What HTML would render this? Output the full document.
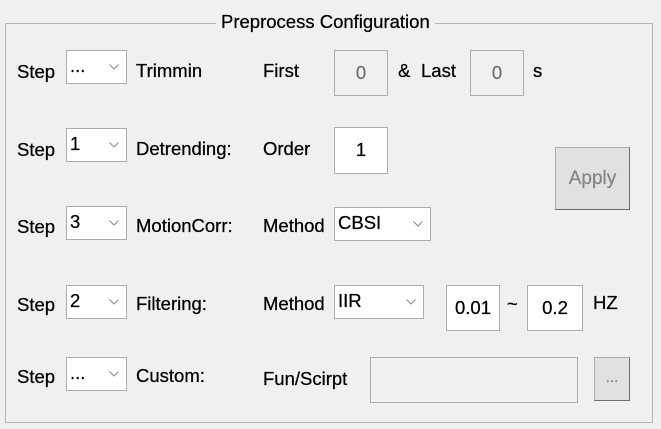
<!DOCTYPE html>
<html><head><style>
body{margin:0;width:661px;height:429px;background:#f0f0f0;font-family:"Liberation Sans",Arial,sans-serif;font-size:18.5px;color:#000;position:relative;overflow:hidden;-webkit-text-stroke:0.25px #000}
.a{position:absolute}
.frame{left:5px;top:23px;width:646px;height:398px;border:1px solid #b4b4b4}
.title{left:216px;top:11px;padding:0 5px;background:#f0f0f0;font-size:18.5px;line-height:22px}
.t{position:absolute;line-height:20px}
.dd{position:absolute;background:#fff;border:1px solid #adadad;box-sizing:border-box;height:34px}
.dd span{position:absolute;left:3px;top:5px;line-height:20px}
.dd svg{position:absolute;right:7px;top:13px}
.box{position:absolute;background:#fff;border:1px solid #adadad;box-sizing:border-box;text-align:center;line-height:44px}
.dis{background:#f0f0f0;color:#6d6d6d;-webkit-text-stroke:0.2px #6d6d6d}
.btn{position:absolute;background:#e1e1e1;border:1px solid #adadad;border-right-color:#6b6b6b;border-bottom-color:#6b6b6b;box-sizing:border-box;color:#838383;text-align:center;-webkit-text-stroke:0.2px #838383}
</style></head><body>
<div class="a frame"></div>
<div class="a title">Preprocess Configuration</div>

<div class="t" style="left:17px;top:62px">Step</div>
<div class="dd" style="left:66px;top:50px;width:61px"><span>...</span><svg width="10" height="6"><path d="M0.5 0.5L5 5L9.5 0.5" fill="none" stroke="#888"/></svg></div>
<div class="t" style="left:136px;top:61px">Trimmin</div>
<div class="t" style="left:263px;top:61px">First</div>
<div class="box dis" style="left:334px;top:50px;width:54px;height:46px">0</div>
<div class="t" style="left:398px;top:61px">&amp;</div>
<div class="t" style="left:421px;top:61px">Last</div>
<div class="box dis" style="left:470px;top:50px;width:54px;height:46px">0</div>
<div class="t" style="left:533px;top:61px">s</div>

<div class="t" style="left:17px;top:140px">Step</div>
<div class="dd" style="left:66px;top:128px;width:61px"><span>1</span><svg width="10" height="6"><path d="M0.5 0.5L5 5L9.5 0.5" fill="none" stroke="#888"/></svg></div>
<div class="t" style="left:136px;top:139px">Detrending:</div>
<div class="t" style="left:263px;top:139px">Order</div>
<div class="box" style="left:334px;top:127px;width:54px;height:47px">1</div>
<div class="btn" style="left:555px;top:147px;width:75px;height:63px;line-height:61px;font-size:19px">Apply</div>

<div class="t" style="left:17px;top:217px">Step</div>
<div class="dd" style="left:66px;top:206px;width:61px"><span>3</span><svg width="10" height="6"><path d="M0.5 0.5L5 5L9.5 0.5" fill="none" stroke="#888"/></svg></div>
<div class="t" style="left:136px;top:216px">MotionCorr:</div>
<div class="t" style="left:263px;top:216px">Method</div>
<div class="dd" style="left:334px;top:207px;width:97px"><span>CBSI</span><svg width="10" height="6"><path d="M0.5 0.5L5 5L9.5 0.5" fill="none" stroke="#888"/></svg></div>

<div class="t" style="left:17px;top:295px">Step</div>
<div class="dd" style="left:66px;top:285px;width:61px"><span>2</span><svg width="10" height="6"><path d="M0.5 0.5L5 5L9.5 0.5" fill="none" stroke="#888"/></svg></div>
<div class="t" style="left:136px;top:294px">Filtering:</div>
<div class="t" style="left:263px;top:294px">Method</div>
<div class="dd" style="left:334px;top:285px;width:90px"><span>IIR</span><svg width="10" height="6"><path d="M0.5 0.5L5 5L9.5 0.5" fill="none" stroke="#888"/></svg></div>
<div class="box" style="left:446px;top:285px;width:54px;height:46px">0.01</div>
<div class="t" style="left:507px;top:294px">~</div>
<div class="box" style="left:527px;top:285px;width:56px;height:46px">0.2</div>
<div class="t" style="left:593px;top:293px">HZ</div>

<div class="t" style="left:17px;top:367px">Step</div>
<div class="dd" style="left:66px;top:357px;width:61px"><span>...</span><svg width="10" height="6"><path d="M0.5 0.5L5 5L9.5 0.5" fill="none" stroke="#888"/></svg></div>
<div class="t" style="left:136px;top:366px">Custom:</div>
<div class="t" style="left:263px;top:369px">Fun/Scirpt</div>
<div class="box dis" style="left:370px;top:357px;width:208px;height:46px"></div>
<div class="btn" style="left:594px;top:357px;width:36px;height:44px;line-height:40px;font-size:15px">...</div>
</body></html>
